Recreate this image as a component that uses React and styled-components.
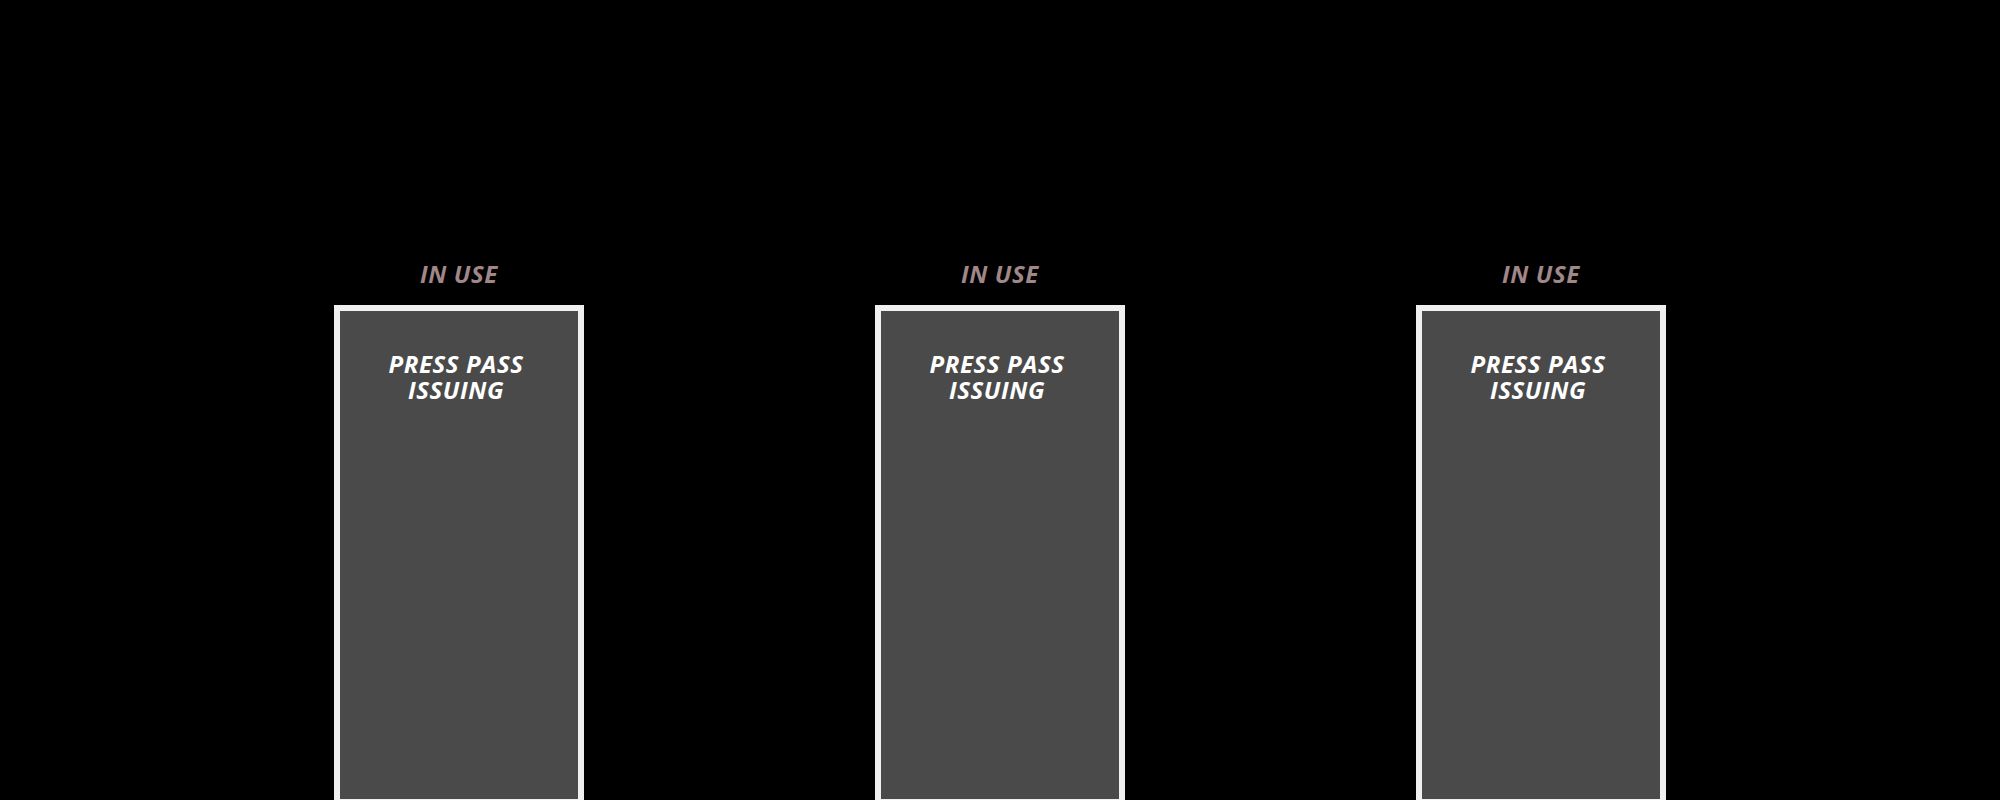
import React from 'react'
import styled, { createGlobalStyle } from 'styled-components';

const GlobalStyle = createGlobalStyle`
  html, body {
    margin: 0;
    padding: 0;
    background: #000;
    overflow: hidden;
  }
  body {
    font-family: "Open Sans", "Liberation Sans", sans-serif;
  }
`;

const stations = [
  { id: 1, status: 'IN USE', name: ['PRESS PASS', 'ISSUING'] },
  { id: 2, status: 'IN USE', name: ['PRESS PASS', 'ISSUING'] },
  { id: 3, status: 'IN USE', name: ['PRESS PASS', 'ISSUING'] },
];

export default function App() {
  return (
    <>
      <GlobalStyle />
      <Page>
        <Row>
          {stations.map(s => (
            <Station key={s.id}>
              <Status>{s.status}</Status>
              <Card>
                <Title>
                  {s.name[0]}<br />{s.name[1]}
                </Title>
              </Card>
            </Station>
          ))}
        </Row>
      </Page>
    </>
  )
}

const Page = styled.div`
  width: 2000px;
  height: 800px;
  background: #000;
  overflow: hidden;
  padding-top: 258px;
  box-sizing: border-box;
`;

const Row = styled.div`
  display: flex;
  justify-content: center;
  gap: 291px;
`;

const Station = styled.div`
  display: flex;
  flex-direction: column;
  align-items: center;
  width: 250px;
`;

const Status = styled.div`
  color: #a08888;
  font-size: 24px;
  line-height: 32px;
  font-weight: 700;
  font-style: italic;
  letter-spacing: 0.6px;
  margin-bottom: 15px;
`;

const Card = styled.div`
  width: 250px;
  height: 500px;
  box-sizing: border-box;
  border: 6px solid #f0f0f0;
  background: #4a4a4a;
  padding: 40px 6px 0 0;
`;

const Title = styled.div`
  color: #fff;
  font-size: 24px;
  line-height: 26px;
  font-weight: 700;
  font-style: italic;
  text-align: center;
  letter-spacing: 0.6px;
`;
